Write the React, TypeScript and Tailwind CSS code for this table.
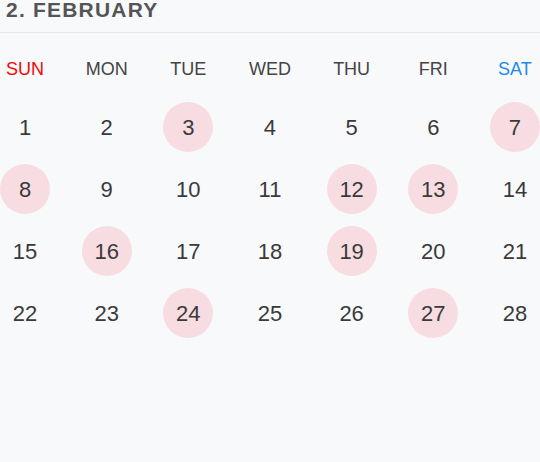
import React from "react";

const days = ["SUN", "MON", "TUE", "WED", "THU", "FRI", "SAT"];
const marked = new Set([3, 7, 8, 12, 13, 16, 19, 24, 27]);

export default function App() {
  const weeks = [0, 1, 2, 3].map((w) => Array.from({ length: 7 }, (_, i) => w * 7 + i + 1));
  return (
    <div
      className="w-[540px] h-[462px] bg-[#f8f9fb] overflow-hidden"
      style={{ fontFamily: "'Liberation Sans', Arial, sans-serif" }}
    >
      <div className="h-[33px] border-b border-[#e6e7ea] pl-[6px]">
        <div className="text-[21px] leading-[19px] font-bold tracking-[1.2px] text-[#555555]">2. FEBRUARY</div>
      </div>
      <div className="mt-[11px] flex justify-between">
        {days.map((d, i) => (
          <div
            key={d}
            className={
              "w-[50px] h-[50px] flex items-center justify-center text-[18px] " +
              (i === 0 ? "text-[#ee0a0a]" : i === 6 ? "text-[#1a8cf0]" : "text-[#444444]")
            }
          >
            {d}
          </div>
        ))}
      </div>
      <div className="mt-2 flex flex-col gap-3">
        {weeks.map((wk, wi) => (
          <div key={wi} className="flex justify-between">
            {wk.map((n) => (
              <div
                key={n}
                className={
                  "w-[50px] h-[50px] rounded-full flex items-center justify-center text-[22px] text-[#3a3a3a] " +
                  (marked.has(n) ? "bg-[#f7dde1]" : "")
                }
              >
                {n}
              </div>
            ))}
          </div>
        ))}
      </div>
    </div>
  );
}
